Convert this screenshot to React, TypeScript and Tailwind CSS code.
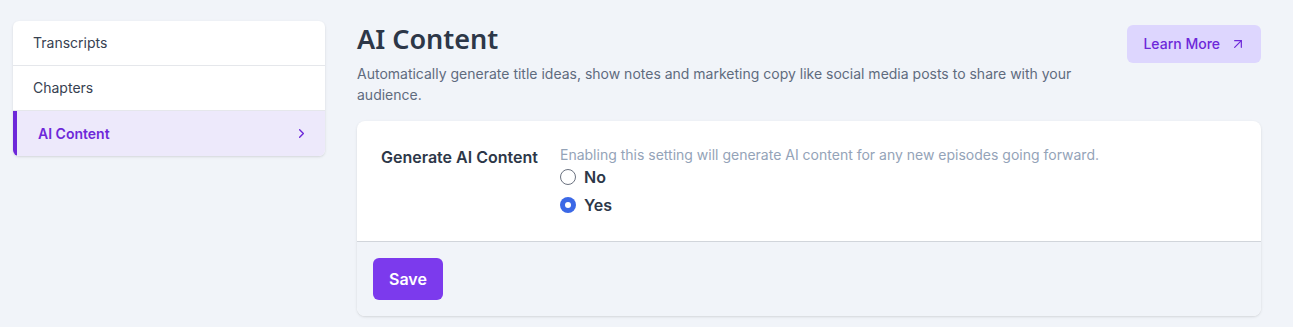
import React from "react";
import { ChevronRight, ArrowUpRight } from "lucide-react";

const navItems = ["Transcripts", "Chapters", "AI Content"];

const Radio = ({ label, checked }: { label: string; checked?: boolean }) => (
  <label className="flex items-center gap-2 h-6">
    {checked ? (
      <span className="w-4 h-4 rounded-full bg-[#3b68e6] flex items-center justify-center">
        <span className="w-1.5 h-1.5 rounded-full bg-white" />
      </span>
    ) : (
      <span className="w-4 h-4 rounded-full border border-[#6b7280] bg-white" />
    )}
    <span className="text-base font-semibold text-[#2d3748]">{label}</span>
  </label>
);

export default function App() {
  const active = "AI Content";
  return (
    <div
      className="min-h-[327px] bg-[#f1f4f9] flex gap-8 pl-[13px] pr-8 pt-[21px] pb-2"
      style={{ fontFamily: "Inter, 'Liberation Sans', sans-serif" }}
    >
      <div className="w-[312px] shrink-0 self-start bg-white rounded-md shadow-sm overflow-hidden">
        {navItems.map((item) => {
          const isActive = item === active;
          return (
            <div
              key={item}
              className={
                isActive
                  ? "h-[45px] flex items-center justify-between pl-[21px] pr-4 bg-[#ede9fb] border-l-4 border-[#6d28d9] text-sm font-semibold text-[#6d28d9]"
                  : "h-[45px] flex items-center px-5 text-sm text-[#374151] border-b border-[#e5e7eb]"
              }
            >
              {item}
              {isActive && <ChevronRight size={15} strokeWidth={2.2} />}
            </div>
          );
        })}
      </div>

      <div className="flex-1">
        <div className="flex justify-between items-start gap-6">
          <div className="max-w-3xl">
            <h1
              className="text-[27px] leading-9 font-semibold text-[#2d3748]"
              style={{ fontFamily: "'Noto Sans', sans-serif" }}
            >
              AI Content
            </h1>
            <p className="mt-[6px] text-sm leading-[21px] text-[#5f6b7e]">
              Automatically generate title ideas, show notes and marketing copy like social media posts to share with your audience.
            </p>
          </div>
          <button className="shrink-0 whitespace-nowrap mt-1 h-[38px] pl-4 pr-[15px] flex items-center gap-2.5 rounded-md bg-[#ddd6fe] text-sm font-medium text-[#6d28d9]">
            Learn More
            <ArrowUpRight size={16} strokeWidth={1.8} />
          </button>
        </div>

        <div className="mt-[16px] bg-white rounded-lg shadow-sm overflow-hidden">
          <div className="flex px-6 py-6">
            <div className="w-[179px] shrink-0 text-base font-semibold text-[#2d3748] leading-6">
              Generate AI Content
            </div>
            <div className="flex flex-col">
              <p className="text-sm leading-5 text-[#94a3b8]">
                Enabling this setting will generate AI content for any new episodes going forward.
              </p>
              <div className="flex flex-col gap-1">
                <Radio label="No" />
                <Radio label="Yes" checked />
              </div>
            </div>
          </div>
          <div className="border-t border-[#d1d5db] bg-[#f1f4f9] px-4 py-4">
            <button className="px-4 h-[42px] rounded-md bg-[#7c3aed] text-white text-base font-semibold">
              Save
            </button>
          </div>
        </div>
      </div>
    </div>
  );
}
